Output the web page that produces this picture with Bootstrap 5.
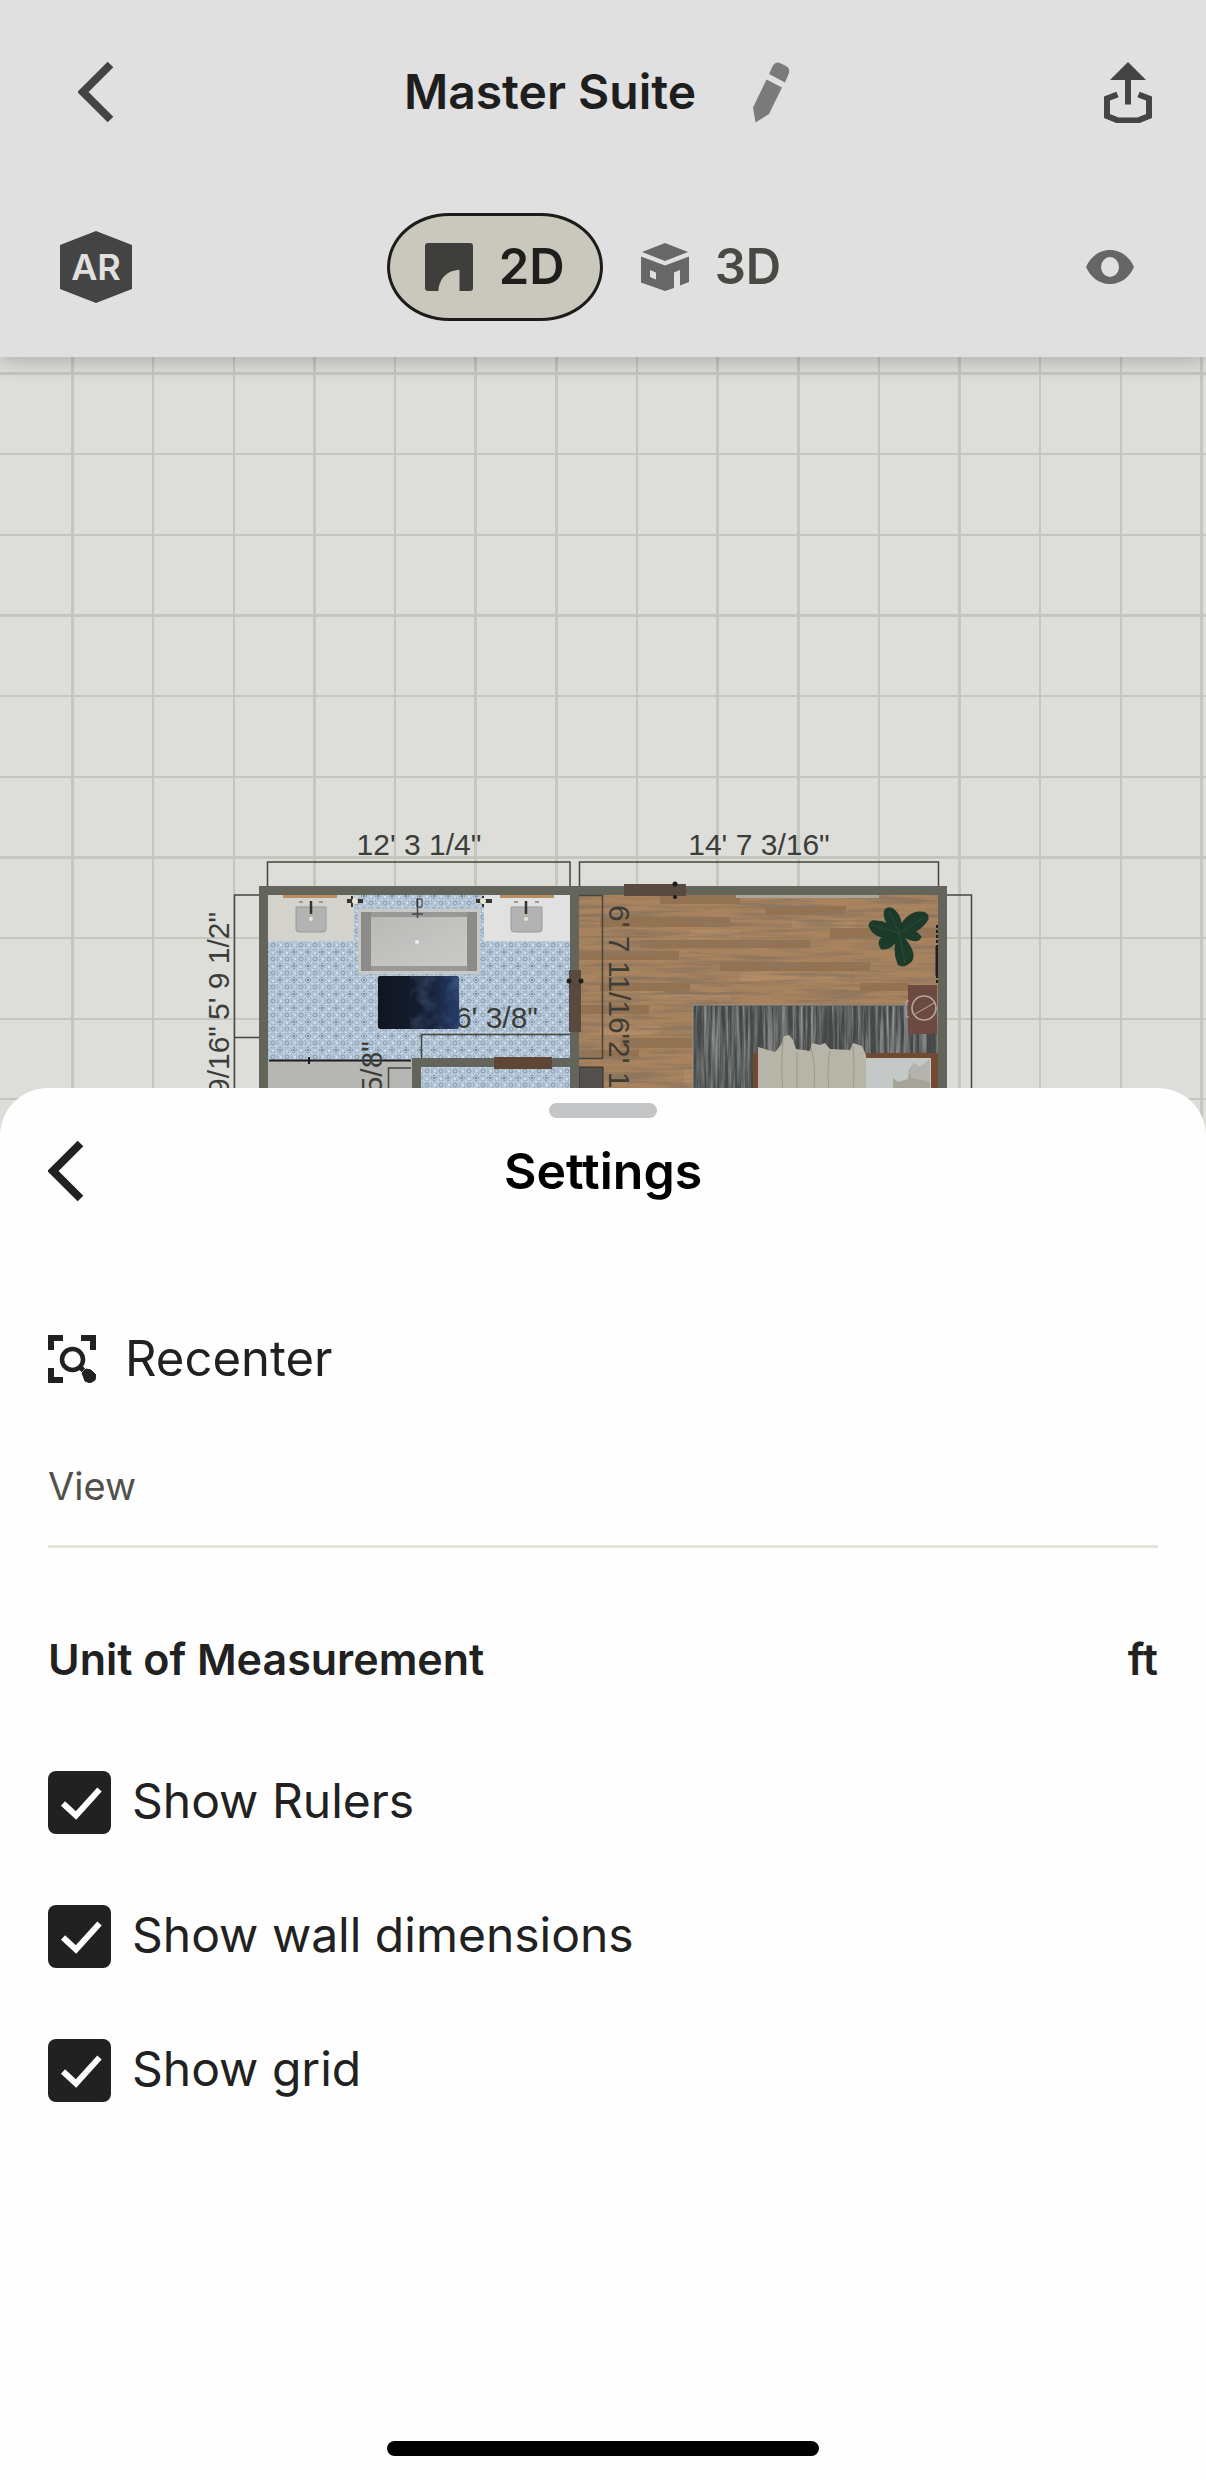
<!DOCTYPE html>
<html lang="en">
<head>
<meta charset="utf-8">
<meta name="viewport" content="width=device-width, initial-scale=1">
<title>Master Suite</title>
<link href="https://cdn.jsdelivr.net/npm/bootstrap@5.3.0/dist/css/bootstrap.min.css" rel="stylesheet">
<style>
  body { font-family: Inter, "Liberation Sans", sans-serif; color: #212121; background: #fefefe; }
  svg { display: block; }
  .plain { background: none; border: 0; padding: 0; color: inherit; line-height: 1; }
  .three-col { display: grid; grid-template-columns: 1fr auto 1fr; align-items: center; }

  .topbar { background: #e0e0e0; color: #444; padding: 38px 54px 36px; box-shadow: 0 4px 20px rgba(60, 62, 55, .3); z-index: 2; }
  .topbar .three-col { min-height: 108px; }
  .top-title { font-size: 48px; line-height: 60px; font-weight: 600; color: #1e1e1e; }
  .title-group { gap: 56px; padding-right: 12px; }
  .back-main { padding-left: 24px; }
  .row-modes { margin-top: 67px; }
  .mode-btn { height: 108px; padding: 0 35px; gap: 26px; border: 3px solid transparent; border-radius: 62px / 54px; background: none; font-size: 49px; line-height: 60px; font-weight: 600; color: #4a4a44; }
  .mode-btn.active { background: #cac8bc; border-color: #1c1c1a; color: #1e1e1c; }
  .ar-btn { padding-left: 6px; }
  .eye-btn { padding-right: 18px; }
  .ar-label { font: 600 36px Inter, sans-serif; fill: #e0e0e0; }

  .stage { background: #dddeda; }
  .stage svg { width: 100%; height: auto; }
  .dim { font: 30px "Liberation Sans", Arial, sans-serif; fill: #3c3d38; }

  .sheet { background: #fefefe; border-radius: 48px 48px 0 0; margin-top: -49px; padding: 15px 48px 24px; z-index: 3; }
  .grabber { width: 108px; height: 15px; border-radius: 8px; background: #c4c5c7; }
  .sheet-head { margin-top: 17px; min-height: 72px; }
  .sheet-title { font-size: 50px; line-height: 60px; font-weight: 600; color: #000; }
  .recenter { margin-top: 116px; height: 72px; gap: 29px; }
  .recenter .opt-text { font-size: 49px; }
  .opt-text { font-size: 48px; line-height: 60px; }
  .view-head { margin-top: 67px; padding-bottom: 35px; border-bottom: 3px solid #e4e4da; font-size: 38px; line-height: 48px; font-weight: 400; color: #51514b; }
  .unit-row { margin-top: 81px; font-size: 43px; line-height: 60px; font-weight: 600; }
  .unit-row .plain { font-weight: 600; line-height: 60px; }
  .checks { margin-top: 82px; gap: 71px; }
  .checks .form-check { gap: 21px; min-height: 63px; }
  .checks .form-check-label { padding-bottom: 3px; }
  .checks .form-check-input { width: 63px; height: 63px; border-radius: 8px; border: 0; }
  .checks .form-check-input:checked { background-color: #212121; background-size: 100% 100%; background-image: url("data:image/svg+xml,%3csvg xmlns='http://www.w3.org/2000/svg' viewBox='0 0 63 63'%3e%3cpath d='M15 32.500 28 44.500 51.500 18.500' fill='none' stroke='%23fff' stroke-width='6'/%3e%3c/svg%3e"); }
  .home-bar { width: 432px; max-width: 60%; height: 15px; border-radius: 8px; background: #000; }
</style>
<script src="https://cdn.jsdelivr.net/npm/bootstrap@5.3.0/dist/js/bootstrap.bundle.min.js"></script>
</head>
<body class="d-flex flex-column min-vh-100">

<header class="topbar position-relative">
  <div class="three-col">
    <button class="plain back-main text-start" aria-label="Back">
      <svg width="36" height="62" viewBox="0 0 36 62"><path d="M32.500 3.500 5 31l27.500 27.500" fill="none" stroke="#444" stroke-width="8"/></svg>
    </button>
    <div class="title-group d-flex align-items-center">
      <h1 class="top-title mb-0">Master Suite</h1>
      <button class="plain" aria-label="Rename">
        <svg width="38" height="62" viewBox="0 0 38 62" fill="#7b7b7b"><path d="M17 13 21 4.500Q23.500.500 28 2l6 3q4 2 3 7l-4 9.500z"/><path d="M14.500 18.500 30 26.500 17 53 3.500 61.500 1 46.500z"/></svg>
      </button>
    </div>
    <button class="plain ms-auto" aria-label="Share">
      <svg width="48" height="62" viewBox="0 0 48 62" fill="#444"><path d="M24 1 42 19H27v24.500h-6V19H6z"/><path d="M13.500 33.500 3 37.500V55l11 4.500h20L45 55V37.500l-10.500-4" fill="none" stroke="#444" stroke-width="6"/></svg>
    </button>
  </div>
  <div class="three-col row-modes">
    <button class="plain ar-btn" aria-label="AR view">
      <svg width="72" height="72" viewBox="0 0 72 72"><path d="M36 0 72 14v44L36 72 0 58V14z" fill="#444"/><text class="ar-label" x="36" y="49" text-anchor="middle">AR</text></svg>
    </button>
    <div class="d-flex" role="group" aria-label="Plan mode">
      <button class="mode-btn active d-flex align-items-center">
        <svg width="48" height="48" viewBox="0 0 48 48"><path d="M3 0h42q3 0 3 3v42q0 3-3 3H34.500V27C22 27 14 36 13.500 48H3q-3 0-3-3V3q0-3 3-3z" fill="#3e3e3c"/></svg>
        2D
      </button>
      <button class="mode-btn d-flex align-items-center">
        <svg width="48" height="48" viewBox="0 0 48 48" fill="#676767"><path d="M24 0 47 9 24 18 1 9z"/><path fill-rule="evenodd" d="M0 13.500 24 22.500 48 13.500V39l-9 3.500V27l-6 2.500V45l-9 3-24-8.500zM9 27v7l6 2.500v-7z"/></svg>
        3D
      </button>
    </div>
    <button class="plain eye-btn ms-auto" aria-label="View settings">
      <svg width="48" height="36" viewBox="0 0 48 36"><path fill-rule="evenodd" d="M24 1C36 1 44 9 48 18 44 27 36 35 24 35S4 27 0 18C4 9 12 1 24 1zm0 7a9 10 0 1 0 0 20 9 10 0 0 0 0-20z" fill="#666"/></svg>
    </button>
  </div>
</header>

<main class="stage">
  <svg viewBox="0 357 1206 780" role="img" aria-label="Floor plan of the master suite">
    <defs>
      <pattern id="tile" width="14" height="14" patternUnits="userSpaceOnUse">
        <rect width="14" height="14" fill="#b7c8d9"/>
        <g fill="none" stroke="#8298ae" stroke-width="1">
          <circle cx="7" cy="7" r="5" stroke-dasharray="1.500 1.500"/><circle cx="7" cy="7" r="2"/>
          <path d="M0 3 3 0M11 0l3 3M14 11l-3 3M3 14l-3-3" stroke-dasharray="2 1"/>
        </g>
        <path d="M0 0h1v1H0zM13 13h1v1h-1zM13 0h1v1h-1zM0 13h1v1H0z" fill="#6f869e"/>
        <path d="M3 3h2v1H3zM9 3h2v1H9zM3 10h2v1H3zM9 10h2v1H9zM6 0h2v2H6zM0 6h2v2H0z" fill="#d5e1ec"/>
      </pattern>
      <filter id="tileGrain" x="0" y="0" width="1" height="1">
        <feTurbulence type="fractalNoise" baseFrequency=".35" numOctaves="2" seed="4"/>
        <feColorMatrix values="0 0 0 0 .4  0 0 0 0 .5  0 0 0 0 .62  4 0 0 0 -2"/>
      </filter>
      <filter id="woodGrain" x="0" y="0" width="1" height="1">
        <feTurbulence type="fractalNoise" baseFrequency=".015 .22" numOctaves="4" seed="6"/>
        <feColorMatrix values="0 0 0 0 .27  0 0 0 0 .18  0 0 0 0 .11  3 0 0 0 -1.200"/>
      </filter>
      <filter id="rugGrain" x="0" y="0" width="1" height="1">
        <feTurbulence type="fractalNoise" baseFrequency=".28 .012" numOctaves="4" seed="3"/>
        <feColorMatrix values="0 0 0 0 .5  0 0 0 0 .52  0 0 0 0 .51  2 0 0 0 -.75"/>
      </filter>
      <filter id="softGrain" x="0" y="0" width="1" height="1">
        <feTurbulence type="fractalNoise" baseFrequency=".06" numOctaves="3" seed="9"/>
        <feColorMatrix values="0 0 0 0 .2  0 0 0 0 .32  0 0 0 0 .56  1.500 0 0 0 -.6"/>
      </filter>
      <linearGradient id="mat"><stop offset="0" stop-color="#11161f"/><stop offset=".6" stop-color="#141e33"/><stop offset="1" stop-color="#253c69"/></linearGradient>
      <linearGradient id="basin" x2="1" y2="1"><stop offset="0" stop-color="#b9b9b8"/><stop offset="1" stop-color="#cacac9"/></linearGradient>
    </defs>

    <g stroke="#c5c6be" stroke-width="2">
      <path d="M153 357v780M234 357v780M395 357v780M637 357v780M879 357v780M1040 357v780M1121 357v780M0 454h1206M0 535h1206M0 696h1206M0 777h1206M0 938h1206M0 1019h1206M0 1099h1206"/>
      <path stroke-width="3" d="M72.500 357v780M314.500 357v780M475.500 357v780M556.500 357v780M717.500 357v780M798.500 357v780M959.500 357v780M1201.500 357v780M0 373.500h1206M0 615.500h1206M0 857.500h1206"/>
    </g>

    <!-- floors -->
    <rect x="264" y="890" width="308" height="247" fill="url(#tile)"/>
    <rect x="264" y="890" width="308" height="247" filter="url(#tileGrain)" opacity=".5"/>
    <rect x="268" y="1061" width="144" height="76" fill="#b6b7b4"/>
    <rect x="575" y="890" width="368" height="247" fill="#a9835e"/>
    <g fill="#80603f" opacity=".5"><path d="M660 895h80v9h-80zM766 906h80v9h-80zM600 917h130v10H600zM830 928h108v10H830zM640 940h170v8H640zM579 951h100v9H579zM720 962h150v9H720zM600 983h90v8h-90zM860 983h50v8h-50zM579 1005h70v9h-70zM620 1038h73v10h-73zM579 1050h60v8h-60z"/></g>
    <g fill="#bc946b" opacity=".5"><path d="M792 919h64v9h-64zM690 930h50v9h-50zM640 991h90v9h-90zM740 972h110v9H740zM600 1026h60v9h-60zM684 1067h9v20h-9z"/></g>
    <rect x="579" y="895" width="359" height="242" filter="url(#woodGrain)"/>

    <!-- bathroom -->
    <path d="M268 895h86v46h-86z" fill="#d3d2cc"/><path d="M484 895h86v46h-86z" fill="#e1e1e1"/>
    <path d="M283 895h54v3h-54zM500 895h54v3h-54z" fill="#b98d5f"/>
    <path d="M296 907h30v22q0 3-3 3h-24q-3 0-3-3zM511 907h31v22q0 3-3 3h-25q-3 0-3-3z" fill="#b3b3b3" stroke="#9a9a9a"/>
    <path d="M311 901v13M526 901v13" stroke="#34342f" stroke-width="2.500"/>
    <path d="M299 902h4M319 902h4M514 902h4M535 902h4" stroke="#999" stroke-width="2"/>
    <circle cx="311" cy="919" r="2" fill="#e8e6cf"/><circle cx="526" cy="919" r="2" fill="#e8e6cf"/>
    <rect x="358" y="909" width="122" height="65" rx="2" fill="#c8c8c6"/>
    <path d="M361 912h116v59H361z" fill="#999896"/><path d="M361 912h10v59h-10zM467 912h10v59h-10z" fill="#8c8b89"/>
    <rect x="371" y="917" width="96" height="49" fill="url(#basin)"/>
    <circle cx="417" cy="942" r="2" fill="#eee"/>
    <path d="M417.500 898v20M412 914h11" stroke="#45464a" stroke-width="1.500" fill="none"/><path d="M417 899h5v8h-5z" fill="none" stroke="#333"/>
    <g fill="#37342d"><path d="M347 899h16v4h-16zM476 899h16v4h-16zM351 896h2v11h-2zM482 896h2v11h-2z"/></g>
    <circle cx="355" cy="901" r="3" fill="#e8e5d2"/><circle cx="483" cy="901" r="3" fill="#e8e5d2"/>
    <text class="dim" x="538" y="1028" text-anchor="end">6' 3/8"</text>
    <rect x="378" y="976" width="81" height="53" rx="2" fill="url(#mat)"/>
    <rect x="410" y="976" width="49" height="53" filter="url(#softGrain)" opacity=".4"/>
    <path d="M269 1060.500h142" stroke="#1c1c1a" stroke-width="2"/><path d="M309 1057v7" stroke="#1c1c1a" stroke-width="2"/>

    <!-- bedroom -->
    <path d="M693 1005h245v132H693z" fill="#454847" stroke="#9b968a"/>
    <rect x="694" y="1006" width="244" height="131" filter="url(#rugGrain)" opacity=".7"/>
    <path d="M753 1053h185v84H753z" fill="#704b31"/><path d="M866 1058h65v79h-65z" fill="#c4c8c7"/>
    <path d="M758 1047 775 1052 781 1045 784 1036 789 1035 793 1040 796 1049 810 1051 812 1043 820 1045 825 1043 830 1049 850 1050 853 1043 862 1046 866 1055V1137H758z" fill="#b7b4a8"/>
    <path d="M783 1040q-3 30 1 60M811 1048q6 20 2 50M830 1050q-4 20 0 50M853 1046q2 20 0 50M797 1052v40" fill="none" stroke="#9a978b"/>
    <path d="M893 1078 898 1082 908 1079 909 1070 914 1063 920 1067 930 1059V1137H893z" fill="#a5a496"/><path d="M909 1072 914 1063 920 1067 930 1059V1082L912 1078z" fill="#b5b3ad"/>
    <path d="M908 985h29v49h-29z" fill="#6c4a41"/><circle cx="924" cy="1008" r="12" fill="none" stroke="#b9aca4" stroke-width="1.500"/><path d="M915 1014l19-11M909 1001h-3v16h3" stroke="#b9aca4" fill="none"/>
    <g fill="#1c3b2b" stroke="#1c3b2b" stroke-width="3" stroke-linejoin="round">
      <path d="M899 933Q882 921 886 910 890 907 894 911 903 920 899 933zM899 933Q904 916 918 913 928 912 927 919 918 934 899 933zM899 933Q914 928 920 937 917 944 899 933zM899 933Q916 952 911 960 905 967 899 964 893 950 899 933zM899 933Q893 949 882 948 879 944 881 940 886 932 899 933zM899 933Q878 942 870 926 870 921 876 922 887 922 899 933z"/>
    </g>
    <path d="M899 933 889 911M899 933 925 917M899 933l6 30M899 933l-28-8" stroke="#2b4c38" fill="none"/>
    <path d="M937 925v58" stroke="#1f201b" stroke-width="2" stroke-dasharray="3 2"/><path d="M937 946v30" stroke="#1f201b" stroke-width="3"/>
    <path d="M736 895h143v3H736z" fill="#aaa49b"/>
    <path d="M579 1067h24v70h-24z" fill="#54504e" stroke="#30302c"/>

    <!-- walls and doors -->
    <g fill="#63655a">
      <path d="M259 886h688v9H259z"/><path d="M259 886h9v251h-9zM570 886h9v251h-9zM938 886h9v251h-9z"/><path d="M412 1058h158v9H412zM412 1058h9v79h-9z"/>
    </g>
    <path d="M624 884h62v12h-62z" fill="#584a3f"/><path d="M569 970h12v62h-12z" fill="#594a40"/><path d="M494 1057h58v12h-58z" fill="#5e4535"/>
    <g fill="#1d1d1b"><circle cx="675" cy="884" r="2.500"/><circle cx="675" cy="897" r="2"/><circle cx="569" cy="981" r="2.500"/><circle cx="581" cy="981" r="2.500"/></g>

    <!-- dimension lines -->
    <g fill="none" stroke="#45463f" stroke-width="1.500">
      <path d="M267.500 886V862H570v24M579.500 886v-24h359v24M259 895h-24.500v242M234.500 1037.500H259M947 895h24.500v242"/>
      <path d="M421.500 1058v-23.500H570M411 1068h-22.500v69M579 895.500h23.500v163H579"/>
    </g>
    <text class="dim" x="419" y="855" text-anchor="middle">12' 3 1/4"</text>
    <text class="dim" x="759" y="855" text-anchor="middle">14' 7 3/16"</text>
    <text class="dim" transform="translate(229 1020) rotate(-90)">5' 9 1/2"</text>
    <text class="dim" transform="translate(229 1026) rotate(-90)" text-anchor="end">9/16"</text>
    <text class="dim" transform="translate(382 1041) rotate(-90)" text-anchor="end">5/8"</text>
    <text class="dim" transform="translate(609 905) rotate(90)">6' 7 11/16"</text>
    <text class="dim" transform="translate(609 1041) rotate(90)">2' 1</text>
  </svg>
</main>

<section class="sheet position-relative flex-grow-1 d-flex flex-column" aria-label="Settings">
  <div class="grabber mx-auto"></div>
  <div class="sheet-head three-col">
    <button class="plain text-start" aria-label="Back">
      <svg width="36" height="62" viewBox="0 0 36 62"><path d="M32.500 3.500 5 31l27.500 27.500" fill="none" stroke="#212121" stroke-width="8"/></svg>
    </button>
    <h2 class="sheet-title mb-0">Settings</h2>
    <span></span>
  </div>

  <button class="plain recenter d-flex align-items-center text-start">
    <svg width="48" height="48" viewBox="0 0 48 48" fill="none" stroke="#212121"><path d="M3 15V3h12M33 3h12v12M3 33v12h12" stroke-width="6"/><circle cx="24.500" cy="24.500" r="10.500" stroke-width="4.500"/><path d="m31.500 31.500 4 4" stroke-width="5"/><path d="M34 38l4-4 5 1 5 5-1 5-5 3-5-2z" fill="#212121" stroke-width="1"/></svg>
    <span class="opt-text">Recenter</span>
  </button>

  <h3 class="view-head mb-0">View</h3>

  <div class="unit-row d-flex justify-content-between">
    <span id="unit-label">Unit of Measurement</span>
    <button class="plain" aria-describedby="unit-label">ft</button>
  </div>

  <div class="checks d-flex flex-column">
    <div class="form-check d-flex align-items-center p-0 m-0">
      <input class="form-check-input m-0 flex-shrink-0" type="checkbox" id="rulers" checked>
      <label class="form-check-label opt-text" for="rulers">Show Rulers</label>
    </div>
    <div class="form-check d-flex align-items-center p-0 m-0">
      <input class="form-check-input m-0 flex-shrink-0" type="checkbox" id="walls" checked>
      <label class="form-check-label opt-text" for="walls">Show wall dimensions</label>
    </div>
    <div class="form-check d-flex align-items-center p-0 m-0">
      <input class="form-check-input m-0 flex-shrink-0" type="checkbox" id="gridlines" checked>
      <label class="form-check-label opt-text" for="gridlines">Show grid</label>
    </div>
  </div>

  <div class="home-bar mx-auto mt-auto"></div>
</section>
</body>
</html>
